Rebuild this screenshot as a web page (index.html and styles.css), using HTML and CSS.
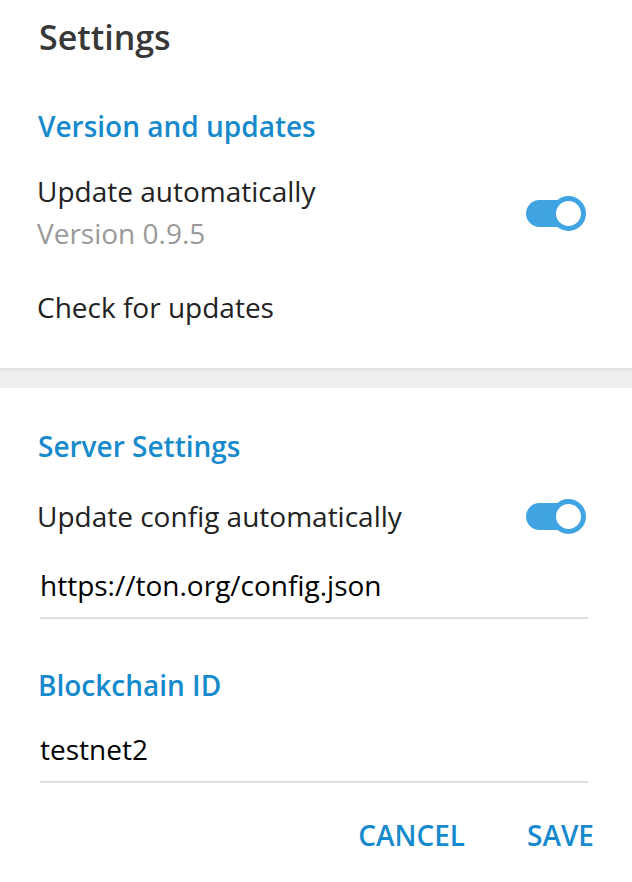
FILE: index.html
```html
<!DOCTYPE html>
<html>

<head>
    <title>Settings</title>
    <link rel="stylesheet" href="styles.css">
</head>

<body>

    <div class="settings-dialog">
        <h1 class="dialog-title">Settings</h1>

        <div class="settings-section">
            <h2 class="section-title">Version and updates</h2>

            <div class="setting-row update-row">
                <div class="setting-text">
                    <div class="setting-label">Update automatically</div>
                    <div class="setting-sub">Version 0.9.5</div>
                </div>
                <div class="toggle on"></div>
            </div>

            <div class="setting-row check-row">
                <div class="setting-label">Check for updates</div>
            </div>
        </div>

        <div class="section-divider"></div>

        <div class="settings-section server-section">
            <h2 class="section-title">Server Settings</h2>

            <div class="setting-row config-row">
                <div class="setting-label">Update config automatically</div>
                <div class="toggle on"></div>
            </div>

            <div class="field config-field">
                <input type="text" class="field-input" value="https://ton.org/config.json">
            </div>

            <h2 class="section-title blockchain-title">Blockchain ID</h2>

            <div class="field id-field">
                <input type="text" class="field-input" value="testnet2">
            </div>
        </div>

        <div class="dialog-buttons">
            <button type="button" class="dialog-button">Cancel</button>
            <button type="button" class="dialog-button">Save</button>
        </div>
    </div>

</body>

</html>
```

FILE: styles.css
```css
body {
    font-family: "Open Sans", "Liberation Sans", sans-serif;
    background: white;
    margin: 0;
}

.settings-dialog {
    width: 632px;
}

.dialog-title {
    margin: 0;
    padding: 17px 0 0 39px;
    font-size: 34px;
    line-height: 40px;
    font-weight: 600;
    color: #383838;
}

.settings-section {
    padding: 0 46px 41px 37px;
}

.section-title {
    margin: 51px 0 0 1px;
    font-size: 28px;
    line-height: 36px;
    font-weight: 600;
    color: #168acd;
}

.setting-row {
    display: flex;
    justify-content: space-between;
    align-items: center;
}

.setting-label {
    font-size: 28px;
    line-height: 40px;
    color: #222222;
}

.setting-sub {
    font-size: 28px;
    line-height: 44px;
    color: #999999;
}

.update-row {
    margin-top: 27px;
}

.check-row {
    margin-top: 32px;
}

.toggle {
    position: relative;
    width: 60px;
    height: 35px;
}

.toggle::before {
    content: "";
    position: absolute;
    left: 0;
    top: 4px;
    width: 50px;
    height: 27px;
    border-radius: 14px;
    background: #40a4e2;
}

.toggle::after {
    content: "";
    position: absolute;
    right: 0;
    top: 0;
    width: 25px;
    height: 25px;
    border: 5px solid #40a4e2;
    border-radius: 50%;
    background: white;
}

.section-divider {
    height: 20px;
    background: linear-gradient(to bottom, #e2e2e2 0px, #eeeeee 5px, #f0f0f0 100%);
}

.server-section {
    padding-bottom: 0;
}

.server-section .section-title {
    margin-top: 40px;
}

.config-row {
    margin-top: 32px;
}

.field {
    margin: 29px 0 0 3px;
    width: 548px;
    border-bottom: 2px solid #dedede;
    padding-bottom: 12px;
}

.field-input {
    display: block;
    width: 100%;
    border: none;
    padding: 0;
    margin: 0;
    font-family: inherit;
    font-size: 28px;
    line-height: 40px;
    height: 40px;
    color: #000000;
    outline: none;
    background: transparent;
}

.server-section .blockchain-title {
    margin-top: 48px;
}

.id-field {
    margin-top: 26px;
}

.dialog-buttons {
    display: flex;
    justify-content: flex-end;
    gap: 62px;
    padding: 32px 38px 0 0;
}

.dialog-button {
    background: none;
    border: none;
    padding: 0;
    font-family: inherit;
    font-size: 28px;
    line-height: 40px;
    font-weight: 600;
    text-transform: uppercase;
    color: #168acd;
    cursor: pointer;
}
```
